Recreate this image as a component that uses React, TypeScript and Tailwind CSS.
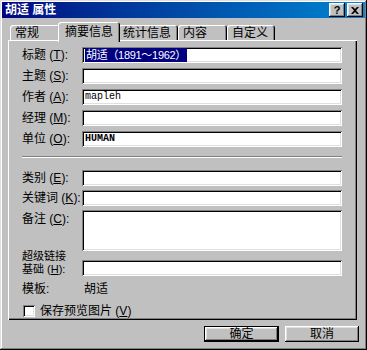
import React from 'react';

const raised =
  'shadow-[inset_-1px_-1px_#000,inset_1px_1px_#fff,inset_-2px_-2px_#808080,inset_2px_2px_#dfdfdf]';
const sunken =
  'shadow-[inset_1px_1px_#808080,inset_-1px_-1px_#fff,inset_2px_2px_#000,inset_-2px_-2px_#dfdfdf]';
const tabEdge =
  'shadow-[inset_1px_1px_#fff,inset_-1px_0_#000,inset_-2px_0_#808080]';

function Hot({ k }: { k: string }) {
  return (
    <>
      {' ('}
      <span className="underline">{k}</span>
      {'):'}
    </>
  );
}

function Field({
  label,
  hot,
  tall,
  children,
}: {
  label: string;
  hot: string;
  tall?: boolean;
  children?: React.ReactNode;
}) {
  return (
    <div className={tall ? 'flex items-start' : 'flex items-center'}>
      <div className={tall ? 'w-[60px] pt-[3px] whitespace-nowrap' : 'w-[60px] whitespace-nowrap'}>
        {label}
        <Hot k={hot} />
      </div>
      <div
        className={
          (tall ? 'h-[41px] ' : 'h-[16px] ') +
          'flex-1 bg-white flex items-center pl-[3px] overflow-hidden ' +
          sunken
        }
      >
        {children}
      </div>
    </div>
  );
}

function Tab({ label, w, active }: { label: string; w: string; active?: boolean }) {
  if (active) {
    return (
      <div
        className={
          'relative z-10 -mx-[2px] -mb-[2px] h-[20px] w-[62px] bg-[#c0c0c0] rounded-t-[3px] pl-[7px] pt-[4px] ' +
          tabEdge
        }
      >
        {label}
      </div>
    );
  }
  return (
    <div className={w + ' h-[15px] rounded-t-[3px] pl-[5px] pt-[2px] ' + tabEdge}>{label}</div>
  );
}

export default function App() {
  return (
    <div
      className={
        "w-[367px] h-[350px] bg-[#c0c0c0] p-[2px] text-[12px] leading-[12px] text-black font-['Liberation_Sans','Noto_Sans_CJK_SC',sans-serif] " +
        'shadow-[inset_-1px_-1px_#000,inset_1px_1px_#dfdfdf,inset_-2px_-2px_#808080,inset_2px_2px_#fff]'
      }
    >
      {/* title bar */}
      <div className="h-[16px] flex items-center justify-between pl-[3px] pr-[2px] bg-linear-to-r from-[#000080] to-[#1084d0]">
        <span className="text-white font-bold">胡适 属性</span>
        <div className="flex gap-[2px]">
          <div className={'w-[16px] h-[14px] bg-[#c0c0c0] flex items-center justify-center text-[11px] font-bold ' + raised}>
            ?
          </div>
          <div className={'w-[16px] h-[14px] bg-[#c0c0c0] flex items-center justify-center ' + raised}>
            <svg width="8" height="7" viewBox="0 0 8 7">
              <path d="M0 0h2l2 2 2-2h2L5 3.5 8 7H6L4 5 2 7H0l3-3.5z" fill="#000" />
            </svg>
          </div>
        </div>
      </div>

      {/* tabs */}
      <div className="flex items-end mt-[4px] ml-[8px]">
        <Tab label="常规" w="w-[50px]" />
        <Tab label="摘要信息" w="w-[62px]" active />
        <Tab label="统计信息" w="w-[60px]" />
        <Tab label="内容" w="w-[49px]" />
        <Tab label="自定义" w="w-[48px]" />
      </div>

      {/* panel */}
      <div
        className={
          'ml-[6px] w-[349px] h-[280px] pt-[7px] pl-[14px] pr-[15px] flex flex-col ' +
          'shadow-[inset_1px_1px_#fff,inset_-1px_-1px_#000,inset_-2px_-2px_#808080]'
        }
      >
        <div className="flex flex-col gap-[5px]">
          <Field label="标题" hot="T">
            <span className="bg-[#000080] text-white text-[11px] leading-[14px] tracking-[-0.3px] px-[1px] whitespace-nowrap">
              胡适（1891～1962）
            </span>
          </Field>
          <Field label="主题" hot="S" />
          <Field label="作者" hot="A">
            <span className="font-['Liberation_Mono',monospace] text-[10px]">mapleh</span>
          </Field>
          <Field label="经理" hot="M" />
          <Field label="单位" hot="O">
            <span className="font-['Liberation_Mono',monospace] text-[10px] font-bold">HUMAN</span>
          </Field>
        </div>

        <div className="mt-[9px] h-[2px] border-t border-t-[#808080] border-b border-b-white" />

        <div className="mt-[12px] flex flex-col gap-[5px]">
          <Field label="类别" hot="E" />
          <div className="-mt-[1px]">
            <Field label="关键词" hot="K" />
          </div>
          <div className="-mt-[1px]">
            <Field label="备注" hot="C" tall />
          </div>
        </div>

        <div className="-mt-[1px] flex items-end">
          <div className="w-[60px] h-[26px] flex flex-col whitespace-nowrap text-[11px]">
            <div className="h-[13px] leading-[13px]">超级链接</div>
            <div className="h-[13px] leading-[13px]">
              基础
              <Hot k="H" />
            </div>
          </div>
          <div className={'h-[16px] flex-1 bg-white ' + sunken} />
        </div>

        <div className="mt-[7px] flex items-center">
          <div className="w-[62px]">模板:</div>
          <div>胡适</div>
        </div>

        <div className="mt-[10px] flex items-center gap-[5px] pl-[1px]">
          <div className={'w-[12px] h-[12px] bg-white ' + sunken} />
          <span>
            保存预览图片
            {' ('}
            <span className="underline">V</span>
            {')'}
          </span>
        </div>
      </div>

      {/* buttons */}
      <div className="flex justify-end gap-[6px] mt-[6px] pr-[6px]">
        <div className="w-[75px] h-[16px] border border-black bg-[#c0c0c0]">
          <div className={'w-full h-full flex items-center justify-center ' + raised}>确定</div>
        </div>
        <div className={'w-[74px] h-[16px] bg-[#c0c0c0] flex items-center justify-center ' + raised}>取消</div>
      </div>
    </div>
  );
}
